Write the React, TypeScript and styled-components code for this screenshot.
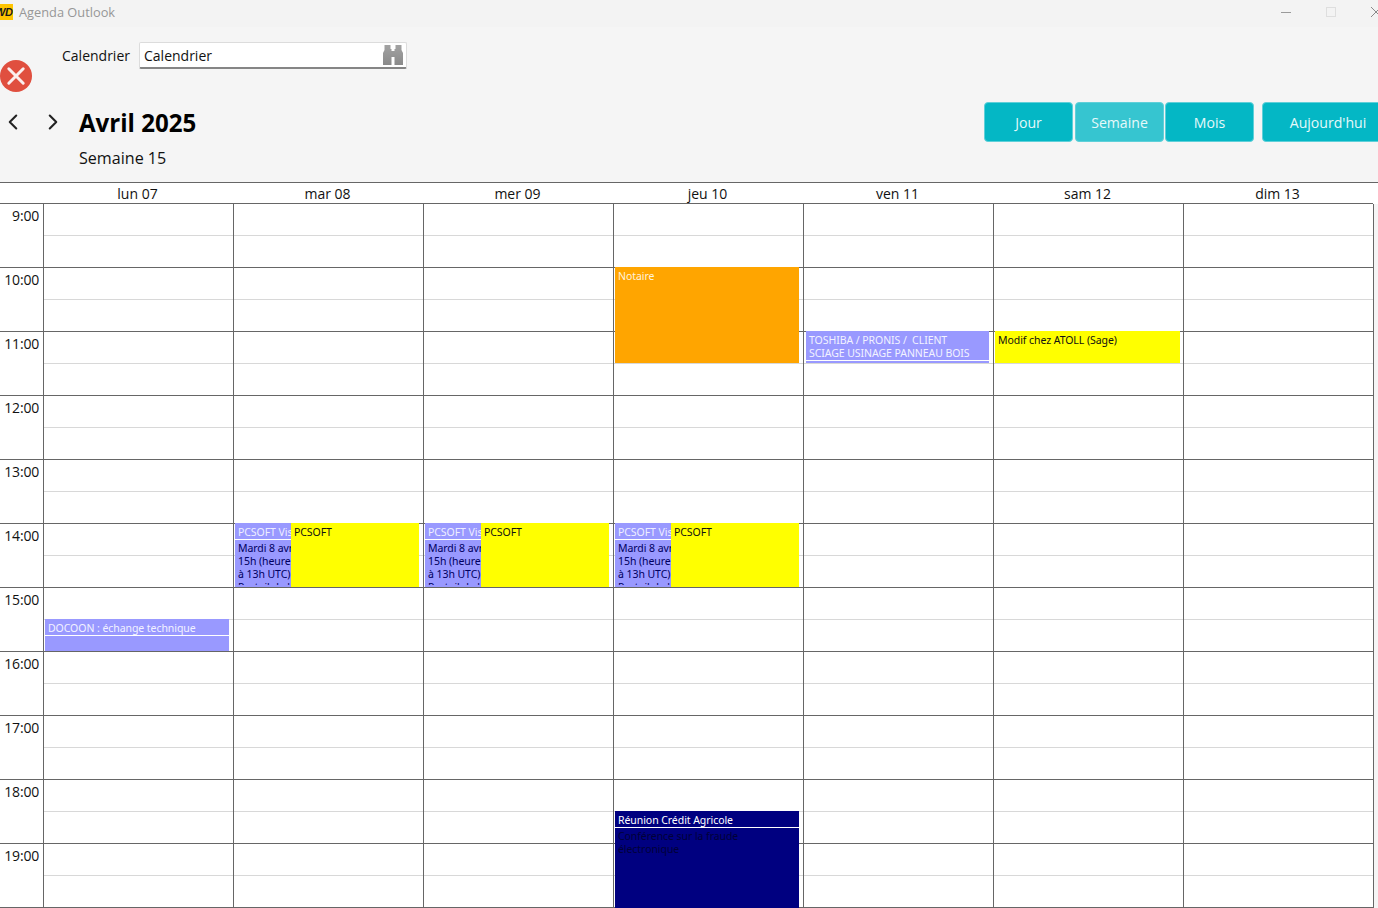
import React from "react";
import styled, { createGlobalStyle } from "styled-components";
import { ChevronLeft, ChevronRight } from "lucide-react";

const Global = createGlobalStyle`
  html, body { margin: 0; padding: 0; height: 100%; background: #f5f5f5; overflow: hidden; }
  * { box-sizing: border-box; }
`;

const UI = `"Open Sans", "Noto Sans", "Liberation Sans", sans-serif`;
const SMALL = `"Noto Sans", "Liberation Sans", sans-serif`;

const Page = styled.div`
  width: 1378px; height: 908px; overflow: hidden;
  display: flex; flex-direction: column;
  font-family: ${UI}; color: #111; background: #f5f5f5;
`;
const TitleBar = styled.div`
  height: 27px; flex: none; display: flex; align-items: center;
  background: #f3f3f3; position: relative; padding-bottom: 3px;
`;
const Logo = styled.div`
  width: 13px; height: 16px; background: #ffc400; overflow: hidden;
  font: italic 700 11px/16px "Liberation Sans", sans-serif; color: #1a1a1a;
  text-indent: -5px; white-space: nowrap; letter-spacing: -0.5px;
`;
const AppName = styled.span`
  margin-left: 6px; font-size: 12.8px; color: #979797;
`;
const WindowControls = styled.div`
  margin-left: auto; display: flex; align-items: center; margin-right: -3px;
`;
const WinBtn = styled.svg<{ $c: string }>`
  width: 10px; height: 10px; margin-left: 35px; display: block;
  stroke: ${(p) => p.$c}; fill: none; stroke-width: 1;
`;
const Header = styled.div`
  height: 155px; flex: none; display: flex; flex-direction: column;
`;
const TopRow = styled.div`
  height: 75px; flex: none; display: flex; align-items: flex-start;
`;
const CloseBadge = styled.svg`
  width: 32px; height: 32px; margin-top: 33px; flex: none; display: block;
`;
const PickerLabel = styled.label`
  margin: 15px 0 0 30px; height: 27px; line-height: 27px; font-size: 14px; width: 77px; flex: none;
`;
const Picker = styled.div`
  margin-top: 15px; width: 268px; height: 27px; background: #fff;
  border: 1px solid #dcdcdc; border-bottom: 2px solid #858585; border-radius: 2px;
  display: flex; align-items: center; justify-content: space-between;
  padding: 0 3px 0 4px; font-size: 14px;
`;
const NavRow = styled.div`
  height: 80px; flex: none; display: flex; align-items: flex-start;
`;
const ArrowBox = styled.div<{ $w: number }>`
  width: ${(p) => p.$w}px; height: 40px; flex: none; display: flex; align-items: center;
  padding-bottom: 1px; color: #222;
`;
const Heading = styled.div`
  margin-top: 4px; display: flex; flex-direction: column;
`;
const MonthTitle = styled.div`
  font-size: 24.1px; font-weight: 700; line-height: 34px; color: #000;
`;
const WeekTitle = styled.div`
  margin-top: 7px; font-size: 16.1px; line-height: 22px; color: #111;
`;
const Buttons = styled.div`
  margin-left: auto; display: flex; margin-right: -16px;
`;
const ViewBtn = styled.button<{ $w: number; $on?: boolean; $gap: number }>`
  width: ${(p) => p.$w}px; height: 40px; margin-left: ${(p) => p.$gap}px;
  background: ${(p) => (p.$on ? "#36c5d0" : "#04b7c5")};
  border: 1px solid #5fd0d9; border-radius: 4px;
  color: #e6f9fa; font: 400 14.1px ${UI}; padding: 0;
`;
const DayHeaderRow = styled.div`
  height: 22px; flex: none; display: grid;
  grid-template-columns: 43px repeat(7, 190px) 1fr; grid-template-rows: 21px;
  background: #fff; border-top: 1px solid #666;
  font-size: 14px;
`;
const HeaderGutter = styled.div`
  border-bottom: 1px solid #666;
`;
const DayName = styled.div`
  text-align: center; line-height: 21px; padding-right: 1px; border-bottom: 1px solid #666;
`;
const Grid = styled.div`
  display: flex; flex: 1; min-height: 0; overflow: hidden;
`;
const TimeCol = styled.div`
  width: 43px; flex: none; background: #fff;
`;
const TimeCell = styled.div`
  height: 64px; border-bottom: 1px solid #666; text-align: right; padding-right: 4px;
  font-size: 14px; line-height: 20px; padding-top: 2px; letter-spacing: -0.2px;
`;
const DayCol = styled.div<{ $last?: boolean }>`
  width: ${(p) => (p.$last ? 191 : 190)}px; flex: none; position: relative; background: #fff;
  border-left: 1px solid #666;
  border-right: ${(p) => (p.$last ? "1px solid #666" : "none")};
`;
const HalfSlot = styled.div<{ $hour?: boolean }>`
  height: 32px; border-bottom: 1px solid ${(p) => (p.$hour ? "#666" : "#d8d8d8")};
`;
const Event = styled.div<{ $bg: string; $fg: string }>`
  position: absolute; overflow: hidden; background: ${(p) => p.$bg}; color: ${(p) => p.$fg};
  font-family: ${SMALL}; font-size: 10.5px; line-height: 13px; letter-spacing: -0.06px;
`;
const EventTitle = styled.div<{ $ruled?: boolean }>`
  padding: 3px 0 0 3px; white-space: pre; overflow: hidden;
  ${(p) => p.$ruled && "border-bottom: 1px solid #fff;"}
`;
const EventBody = styled.div<{ $dark?: boolean }>`
  padding: 2px 0 0 3px; color: ${(p) => (p.$dark ? "#000038" : "#000060")}; white-space: pre;
  max-height: ${(p) => (p.$dark ? "none" : "45px")}; overflow: hidden;
`;

const days = ["lun 07", "mar 08", "mer 09", "jeu 10", "ven 11", "sam 12", "dim 13"];
const hours = ["9:00", "10:00", "11:00", "12:00", "13:00", "14:00", "15:00", "16:00", "17:00", "18:00", "19:00"];

type Ev = {
  left: number; top: number; w: number; h: number; bg: string; fg: string;
  title: string; titleH?: number; body?: string; dark?: boolean;
};
const BLUE = "#9999ff";
const pcsoftBlue = (): Ev => ({
  left: 1, top: 319, w: 56, h: 64, bg: BLUE, fg: "#eeeeff", title: "PCSOFT Visio", titleH: 16,
  body: "Mardi 8 avril de\n15h (heure de Paris)\nà 13h UTC)\nPortail de la",
});
const pcsoftYellow = (): Ev => ({
  left: 57, top: 319, w: 128, h: 64, bg: "#ffff00", fg: "#111", title: "PCSOFT",
});
const events: Ev[][] = [
  [{ left: 1, top: 415, w: 184, h: 32, bg: BLUE, fg: "#f2f2ff", title: "DOCOON : échange technique", titleH: 16 }],
  [pcsoftBlue(), pcsoftYellow()],
  [pcsoftBlue(), pcsoftYellow()],
  [
    { left: 1, top: 63, w: 184, h: 96, bg: "#ffa500", fg: "#fff3dc", title: "Notaire" },
    pcsoftBlue(),
    pcsoftYellow(),
    { left: 1, top: 607, w: 184, h: 97, bg: "#000080", fg: "#ffffff", title: "Réunion Crédit Agricole", titleH: 16, body: "Conférence sur la fraude\nélectronique", dark: true },
  ],
  [{ left: 2, top: 127, w: 183, h: 32, bg: BLUE, fg: "#f2f2ff", title: "TOSHIBA / PRONIS /  CLIENT\nSCIAGE USINAGE PANNEAU BOIS", titleH: 29 }],
  [{ left: 1, top: 127, w: 185, h: 32, bg: "#ffff00", fg: "#111", title: "Modif chez ATOLL (Sage)" }],
  [],
];

const Binoculars = () => (
  <svg width="20" height="20" viewBox="0 0 20 20">
    <defs>
      <linearGradient id="bin" x1="0" y1="0" x2="0" y2="1">
        <stop offset="0" stopColor="#a2a2a2" />
        <stop offset="1" stopColor="#8a8a8a" />
      </linearGradient>
    </defs>
    <path
      fill="url(#bin)"
      d="M1.5 0H7.5V4H8.5V6H11.5V4H12.5V0H18.5V5L20 8V20H11.5V12H8.5V20H0V8L1.5 5Z"
    />
  </svg>
);

export default function App() {
  return (
    <Page>
      <Global />
      <TitleBar>
        <Logo>WD</Logo>
        <AppName>Agenda Outlook</AppName>
        <WindowControls>
          <WinBtn $c="#9a9a9a" viewBox="0 0 10 10"><path d="M0 5.5H10" /></WinBtn>
          <WinBtn $c="#dedede" viewBox="0 0 10 10"><rect x="0.5" y="0.5" width="9" height="9" /></WinBtn>
          <WinBtn $c="#8a8a8a" viewBox="0 0 10 10"><path d="M0 0L10 10M10 0L0 10" /></WinBtn>
        </WindowControls>
      </TitleBar>
      <Header>
        <TopRow>
          <CloseBadge viewBox="0 0 32 32">
            <circle cx="16" cy="16" r="16" fill="#e04f3f" />
            <path d="M8.8 8.8L23.2 23.2M23.2 8.8L8.8 23.2" stroke="#fbeeee" strokeWidth="3" strokeLinecap="round" />
          </CloseBadge>
          <PickerLabel>Calendrier</PickerLabel>
          <Picker>
            Calendrier
            <Binoculars />
          </Picker>
        </TopRow>
        <NavRow>
          <ArrowBox $w={40}><ChevronLeft size={26} strokeWidth={1.9} /></ArrowBox>
          <ArrowBox $w={39}><ChevronRight size={26} strokeWidth={1.9} /></ArrowBox>
          <Heading>
            <MonthTitle>Avril 2025</MonthTitle>
            <WeekTitle>Semaine 15</WeekTitle>
          </Heading>
          <Buttons>
            <ViewBtn $w={89} $gap={0}>Jour</ViewBtn>
            <ViewBtn $w={89} $gap={2} $on>Semaine</ViewBtn>
            <ViewBtn $w={89} $gap={1}>Mois</ViewBtn>
            <ViewBtn $w={132} $gap={8}>Aujourd'hui</ViewBtn>
          </Buttons>
        </NavRow>
      </Header>
      <DayHeaderRow>
        <HeaderGutter />
        {days.map((d) => <DayName key={d}>{d}</DayName>)}
        <div />
      </DayHeaderRow>
      <Grid>
        <TimeCol>
          {hours.map((h) => <TimeCell key={h}>{h}</TimeCell>)}
        </TimeCol>
        {days.map((d, i) => (
          <DayCol key={d} $last={i === 6}>
            {hours.map((h) => (
              <React.Fragment key={h}>
                <HalfSlot />
                <HalfSlot $hour />
              </React.Fragment>
            ))}
            {events[i].map((e, j) => (
              <Event
                key={j}
                $bg={e.bg}
                $fg={e.fg}
                style={{ left: e.left, top: e.top, width: e.w, height: e.h }}
              >
                <EventTitle $ruled={!!e.titleH} style={e.titleH ? { height: e.titleH + 1 } : undefined}>{e.title}</EventTitle>
                {e.body && <EventBody $dark={e.dark}>{e.body}</EventBody>}
              </Event>
            ))}
          </DayCol>
        ))}
      </Grid>
    </Page>
  );
}
